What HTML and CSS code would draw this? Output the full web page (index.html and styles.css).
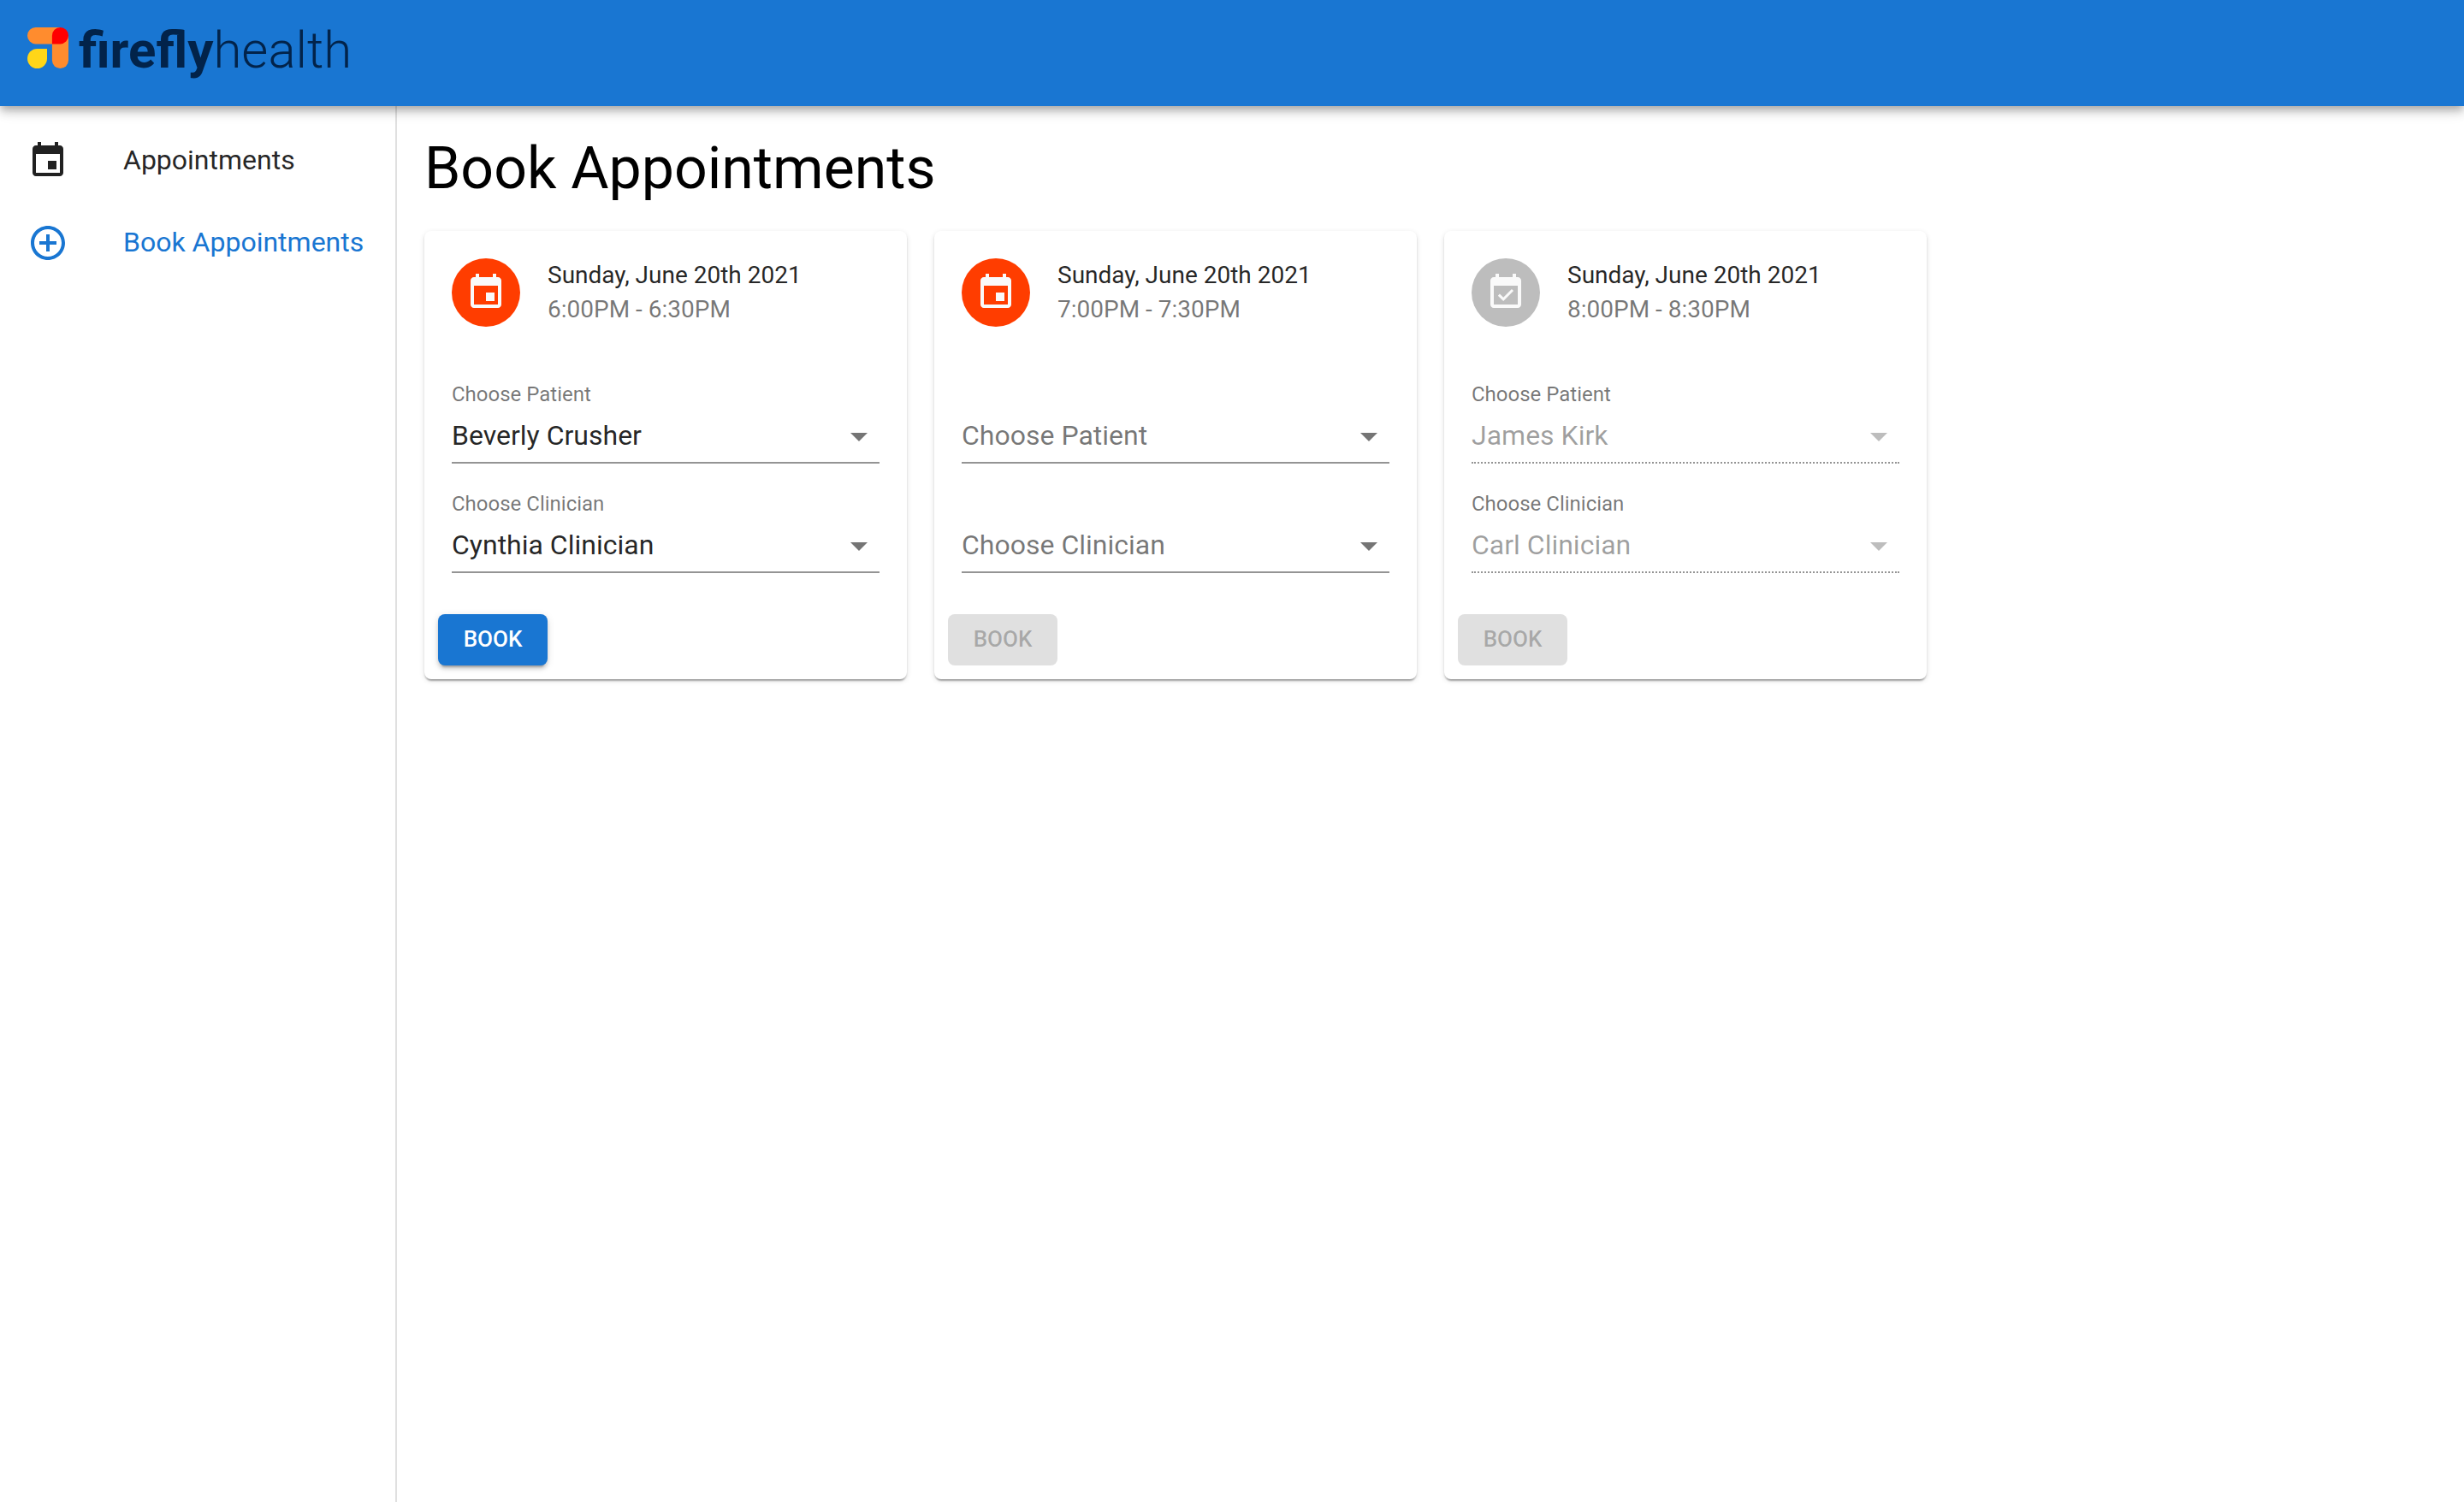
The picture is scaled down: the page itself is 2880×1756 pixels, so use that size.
FILE: index.html
```html
<!DOCTYPE html>
<html lang="en">
<head>
<meta charset="utf-8">
<meta name="viewport" content="width=device-width, initial-scale=1">
<title>Book Appointments</title>
<link rel="stylesheet" href="styles.css">
</head>
<body>
<svg class="sprite" aria-hidden="true">
  <symbol id="event" viewBox="0 0 24 24"><path d="M17 12h-5v5h5v-5zM16 1v2H8V1H6v2H5c-1.11 0-1.99.9-1.99 2L3 19c0 1.1.89 2 2 2h14c1.1 0 2-.9 2-2V5c0-1.1-.9-2-2-2h-1V1h-2zm3 18H5V8h14v11z"/></symbol>
  <symbol id="event-available" viewBox="0 0 24 24"><path d="M16.53 11.06L15.47 10l-4.88 4.88-2.12-2.12-1.06 1.06L10.59 17l5.94-5.94zM19 3h-1V1h-2v2H8V1H6v2H5c-1.11 0-1.99.9-1.99 2L3 19c0 1.1.89 2 2 2h14c1.1 0 2-.9 2-2V5c0-1.1-.9-2-2-2zm0 16H5V8h14v11z"/></symbol>
  <symbol id="add-circle" viewBox="0 0 24 24"><path d="M13 7h-2v4H7v2h4v4h2v-4h4v-2h-4V7zm-1-5C6.48 2 2 6.48 2 12s4.48 10 10 10 10-4.48 10-10S17.52 2 12 2zm0 18c-4.41 0-8-3.59-8-8s3.59-8 8-8 8 3.59 8 8-3.59 8-8 8z"/></symbol>
  <symbol id="arrow" viewBox="0 0 24 24"><path d="M7 10l5 5 5-5z"/></symbol>
</svg>

<header class="app-bar">
  <a class="brand" href="#">
    <svg class="brand-mark" viewBox="0 0 48 48" aria-hidden="true">
      <path fill="#ff8c2e" d="M9.7 0H38.3V19.4H9.7A9.7 9.7 0 0 1 9.7 0Z"/>
      <path fill="#ff8c2e" d="M28.9 9.7H48V38.4A9.55 9.6 0 0 1 28.9 38.4Z"/>
      <path fill="#f00" d="M28.9 19.4V9.7A9.55 9.7 0 1 1 38.4 19.4Z"/>
      <path fill="#ffd618" d="M23 25V36.5A11.5 11.5 0 1 1 11.5 25Z"/>
    </svg>
    <span class="brand-name"><b>firefly</b>health</span>
  </a>
</header>

<div class="layout">
  <nav class="sidebar">
    <a class="nav-item" href="#"><svg class="icon" aria-hidden="true"><use href="#event"/></svg>Appointments</a>
    <a class="nav-item nav-item-active" href="#" aria-current="page"><svg class="icon" aria-hidden="true"><use href="#add-circle"/></svg>Book Appointments</a>
  </nav>

  <main class="content">
    <h1 class="page-title">Book Appointments</h1>
    <div class="cards">

      <form class="card">
        <div class="card-header">
          <span class="avatar"><svg class="icon" aria-hidden="true"><use href="#event"/></svg></span>
          <div>
            <h2 class="card-date">Sunday, June 20th 2021</h2>
            <p class="card-time">6:00PM - 6:30PM</p>
          </div>
        </div>
        <div class="card-fields">
          <div class="field">
            <label for="patient-1">Choose Patient</label>
            <select id="patient-1"><option>Beverly Crusher</option></select>
            <svg class="icon field-arrow" aria-hidden="true"><use href="#arrow"/></svg>
          </div>
          <div class="field">
            <label for="clinician-1">Choose Clinician</label>
            <select id="clinician-1"><option>Cynthia Clinician</option></select>
            <svg class="icon field-arrow" aria-hidden="true"><use href="#arrow"/></svg>
          </div>
        </div>
        <div class="card-actions"><button class="button" type="button">BOOK</button></div>
      </form>

      <form class="card">
        <div class="card-header">
          <span class="avatar"><svg class="icon" aria-hidden="true"><use href="#event"/></svg></span>
          <div>
            <h2 class="card-date">Sunday, June 20th 2021</h2>
            <p class="card-time">7:00PM - 7:30PM</p>
          </div>
        </div>
        <div class="card-fields">
          <div class="field field-empty">
            <label for="patient-2">Choose Patient</label>
            <select id="patient-2"><option value=""></option></select>
            <svg class="icon field-arrow" aria-hidden="true"><use href="#arrow"/></svg>
          </div>
          <div class="field field-empty">
            <label for="clinician-2">Choose Clinician</label>
            <select id="clinician-2"><option value=""></option></select>
            <svg class="icon field-arrow" aria-hidden="true"><use href="#arrow"/></svg>
          </div>
        </div>
        <div class="card-actions"><button class="button" type="button" disabled>BOOK</button></div>
      </form>

      <form class="card">
        <div class="card-header">
          <span class="avatar avatar-booked"><svg class="icon" aria-hidden="true"><use href="#event-available"/></svg></span>
          <div>
            <h2 class="card-date">Sunday, June 20th 2021</h2>
            <p class="card-time">8:00PM - 8:30PM</p>
          </div>
        </div>
        <div class="card-fields">
          <div class="field">
            <label for="patient-3">Choose Patient</label>
            <select id="patient-3" disabled><option>James Kirk</option></select>
            <svg class="icon field-arrow" aria-hidden="true"><use href="#arrow"/></svg>
          </div>
          <div class="field">
            <label for="clinician-3">Choose Clinician</label>
            <select id="clinician-3" disabled><option>Carl Clinician</option></select>
            <svg class="icon field-arrow" aria-hidden="true"><use href="#arrow"/></svg>
          </div>
        </div>
        <div class="card-actions"><button class="button" type="button" disabled>BOOK</button></div>
      </form>

    </div>
  </main>
</div>
</body>
</html>
```

FILE: styles.css
```css
:root {
  --primary: #1976d2;
  --text: rgba(0, 0, 0, 0.87);
  --text-secondary: rgba(0, 0, 0, 0.54);
  --text-disabled: rgba(0, 0, 0, 0.38);
}

* {
  box-sizing: border-box;
}

body {
  display: flex;
  flex-direction: column;
  min-height: 100vh;
  margin: 0;
  background: #fff;
  color: var(--text);
  font: 400 32px/46px Roboto, sans-serif;
}

.sprite {
  display: none;
}

.icon {
  flex: none;
  width: 48px;
  height: 48px;
  fill: currentColor;
}

/* App bar */
.app-bar {
  z-index: 1;
  display: flex;
  padding: 32px;
  background: var(--primary);
  box-shadow: 0 4px 8px -2px rgba(0, 0, 0, 0.2), 0 8px 10px rgba(0, 0, 0, 0.14), 0 2px 20px rgba(0, 0, 0, 0.12);
}

.brand {
  display: flex;
  gap: 12px;
  height: 60px;
  color: #02234a;
  text-decoration: none;
}

.brand-mark {
  width: 48px;
  height: 48px;
}

.brand-name {
  font-size: 60px;
  font-weight: 300;
  line-height: 54px;
}

.brand-name b {
  font-weight: 700;
}

/* Page frame */
.layout {
  display: flex;
  flex: 1;
}

.sidebar {
  flex: none;
  width: 464px;
  padding: 16px 0;
  border-right: 2px solid rgba(0, 0, 0, 0.12);
}

.nav-item {
  display: flex;
  gap: 64px;
  padding: 24px 32px;
  color: var(--text);
  text-decoration: none;
  white-space: nowrap;
}

.nav-item-active {
  color: var(--primary);
}

.content {
  flex: 1;
  min-width: 0;
  padding: 32px;
}

.page-title {
  margin: 0 0 32px;
  color: #000;
  font-size: 68px;
  font-weight: 400;
  line-height: 82px;
}

/* Appointment cards */
.cards {
  display: grid;
  grid-template-columns: repeat(auto-fill, 564px);
  gap: 32px;
}

.card {
  border-radius: 8px;
  background: #fff;
  box-shadow: 0 4px 2px -2px rgba(0, 0, 0, 0.2), 0 2px 2px rgba(0, 0, 0, 0.14), 0 2px 6px rgba(0, 0, 0, 0.12);
}

.card-header {
  display: flex;
  gap: 32px;
  padding: 32px;
  font-size: 28px;
  line-height: 40px;
}

.avatar {
  display: flex;
  align-items: center;
  justify-content: center;
  width: 80px;
  height: 80px;
  border-radius: 50%;
  background: #ff3d00;
  color: #fafafa;
}

.avatar-booked {
  background: #bdbdbd;
}

.card-date,
.card-time {
  margin: 0;
  font: inherit;
}

.card-time {
  color: var(--text-secondary);
}

.card-fields {
  display: grid;
  gap: 32px;
  padding: 32px;
}

.field {
  display: grid;
  grid-template-rows: 32px 64px;
}

.field label {
  grid-area: 1 / 1;
  color: var(--text-secondary);
  font-size: 24px;
  line-height: 30px;
}

.field select {
  grid-area: 2 / 1;
  width: 100%;
  padding: 12px 48px 12px 0;
  appearance: none;
  border: 0;
  border-bottom: 2px solid rgba(0, 0, 0, 0.42);
  border-radius: 0;
  background: transparent;
  color: var(--text);
  font: 400 32px/38px Roboto, sans-serif;
}

.field select:disabled {
  border-bottom-style: dotted;
  color: var(--text-disabled);
  opacity: 1;
}

.field-arrow {
  grid-area: 2 / 1;
  align-self: center;
  justify-self: end;
  color: var(--text-secondary);
  pointer-events: none;
}

.field select:disabled + .field-arrow {
  color: rgba(0, 0, 0, 0.26);
}

/* With nothing chosen, the label rests on the input line */
.field-empty label {
  grid-area: 2 / 1;
  padding-top: 12px;
  font-size: 32px;
  line-height: 38px;
  pointer-events: none;
}

.card-actions {
  display: flex;
  padding: 16px;
}

.button {
  min-width: 128px;
  height: 60px;
  padding: 8px 20px 10px;
  border: 0;
  border-radius: 8px;
  background: var(--primary);
  box-shadow: 0 6px 2px -4px rgba(0, 0, 0, 0.2), 0 4px 4px rgba(0, 0, 0, 0.14), 0 2px 10px rgba(0, 0, 0, 0.12);
  color: #fff;
  font: 500 26px/42px Roboto, sans-serif;
}

.button:disabled {
  background: #e0e0e0;
  box-shadow: none;
  color: rgba(0, 0, 0, 0.26);
}
```
